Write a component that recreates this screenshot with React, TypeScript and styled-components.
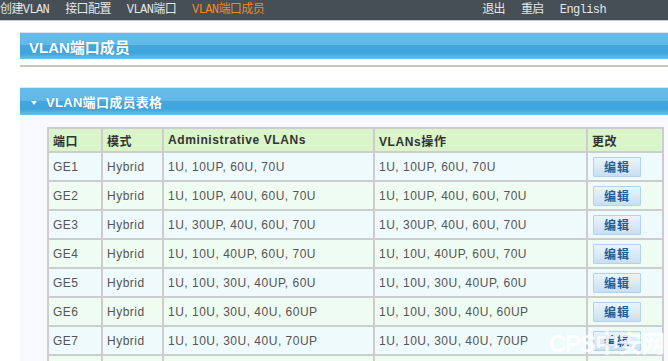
import React from "react";
import styled, { createGlobalStyle } from "styled-components";

const GlobalStyle = createGlobalStyle`
  html, body {
    margin: 0;
    padding: 0;
    background: #ffffff;
    overflow: hidden;
  }
  body {
    font-family: "Liberation Sans", "Noto Sans CJK SC", sans-serif;
  }
`;

interface PortRow {
  port: string;
  mode: string;
  admin: string;
  oper: string;
}

const rows: PortRow[] = [
  { port: "GE1", mode: "Hybrid", admin: "1U, 10UP, 60U, 70U", oper: "1U, 10UP, 60U, 70U" },
  { port: "GE2", mode: "Hybrid", admin: "1U, 10UP, 40U, 60U, 70U", oper: "1U, 10UP, 40U, 60U, 70U" },
  { port: "GE3", mode: "Hybrid", admin: "1U, 30UP, 40U, 60U, 70U", oper: "1U, 30UP, 40U, 60U, 70U" },
  { port: "GE4", mode: "Hybrid", admin: "1U, 10U, 40UP, 60U, 70U", oper: "1U, 10U, 40UP, 60U, 70U" },
  { port: "GE5", mode: "Hybrid", admin: "1U, 10U, 30U, 40UP, 60U", oper: "1U, 10U, 30U, 40UP, 60U" },
  { port: "GE6", mode: "Hybrid", admin: "1U, 10U, 30U, 40U, 60UP", oper: "1U, 10U, 30U, 40U, 60UP" },
  { port: "GE7", mode: "Hybrid", admin: "1U, 10U, 30U, 40U, 70UP", oper: "1U, 10U, 30U, 40U, 70UP" },
];

const App: React.FC = () => {
  return (
    <Page>
      <GlobalStyle />
      <TopNav>
        <NavGroup>
          <NavItem>创建VLAN</NavItem>
          <NavItem>接口配置</NavItem>
          <NavItem>VLAN端口</NavItem>
          <NavItem $active>VLAN端口成员</NavItem>
        </NavGroup>
        <NavGroup>
          <NavItem>退出</NavItem>
          <NavItem>重启</NavItem>
          <NavItem>English</NavItem>
        </NavGroup>
      </TopNav>

      <Content>
        <TitleBar>VLAN端口成员</TitleBar>
        <Divider />

        <Panel>
          <PanelHeader>
            <Caret />
            VLAN端口成员表格
          </PanelHeader>
          <PanelBody>
            <Table>
              <colgroup>
                <col style={{ width: 54 }} />
                <col style={{ width: 61 }} />
                <col style={{ width: 211 }} />
                <col style={{ width: 213 }} />
                <col style={{ width: 76 }} />
              </colgroup>
              <thead>
                <tr>
                  <Th>端口</Th>
                  <Th>模式</Th>
                  <Th>Administrative VLANs</Th>
                  <Th>VLANs操作</Th>
                  <Th>更改</Th>
                </tr>
              </thead>
              <tbody>
                {rows.map((r, i) => (
                  <Row key={r.port} $alt={i % 2 === 1}>
                    <Td>{r.port}</Td>
                    <Td>{r.mode}</Td>
                    <Td>{r.admin}</Td>
                    <Td>{r.oper}</Td>
                    <Td>
                      <EditButton>编辑</EditButton>
                    </Td>
                  </Row>
                ))}
                {/* next row, only its top edge shows in the window */}
                <Row $alt>
                  <Td />
                  <Td />
                  <Td />
                  <Td />
                  <Td />
                </Row>
              </tbody>
            </Table>
          </PanelBody>
        </Panel>
      </Content>

      <Watermark>CPS中安网</Watermark>
    </Page>
  );
};

export default App;

const Page = styled.div`
  position: relative;
  width: 668px;
  height: 361px;
  overflow: hidden;
  background: #ffffff;
`;

const TopNav = styled.div`
  height: 20px;
  background: #464f55;
  border-bottom: 1px solid #c9ccce;
  display: flex;
  align-items: center;
  justify-content: space-between;
  padding: 0 62px 0 0;
`;

const NavGroup = styled.div`
  display: flex;
  align-items: center;
  gap: 16px;
`;

const NavItem = styled.span<{ $active?: boolean }>`
  font-family: "Liberation Mono", "Noto Sans CJK SC", monospace;
  font-size: 12px;
  letter-spacing: -0.6px;
  line-height: 20px;
  color: ${(p) => (p.$active ? "#f28a1c" : "#e4e6e8")};
  white-space: nowrap;
`;

const Content = styled.div`
  padding: 11px 0 0 20px;
`;

const BlueBar = styled.div`
  color: #ffffff;
  font-weight: bold;
  display: flex;
  align-items: center;
  border-top: 1px solid #d4e8f5;
  background: linear-gradient(
    to bottom,
    #66bbe8 0%,
    #62b9e8 46%,
    #43a7de 48%,
    #3ea5dc 78%,
    #6bbfe9 100%
  );
  text-shadow: 0 0 1px rgba(30, 90, 140, 0.4);
  white-space: nowrap;
`;

const TitleBar = styled(BlueBar)`
  height: 26px;
  padding-left: 9px;
  font-size: 15px;
  font-family: "Liberation Sans", "Noto Sans CJK SC", sans-serif;
`;

const Divider = styled.div`
  margin-top: 6px;
  height: 2px;
  background: #c9c5bd;
`;

const Panel = styled.div`
  margin-top: 20px;
`;

const PanelHeader = styled(BlueBar)`
  height: 27px;
  padding-left: 11px;
  font-size: 13px;
  letter-spacing: 0.3px;
  gap: 9px;
`;

const Caret = styled.span`
  width: 0;
  height: 0;
  border-left: 3px solid transparent;
  border-right: 3px solid transparent;
  border-top: 4px solid #ffffff;
  margin-top: 2px;
`;

const PanelBody = styled.div`
  background: #f7f9fc;
  padding: 12px 0 20px 27px;
`;

const Table = styled.table`
  border-collapse: collapse;
  table-layout: fixed;
  width: 615px;
  border: 2px solid #cdcdcd;
`;

const Th = styled.th`
  height: 22px;
  padding: 0 0 0 4px;
  text-align: left;
  background: #d9f5c9;
  border: 2px solid #cdcdcd;
  color: #333333;
  font-size: 12px;
  font-weight: bold;
  letter-spacing: 0.6px;
  font-family: "Liberation Sans", "Noto Sans CJK SC", sans-serif;
  white-space: nowrap;
`;

const Row = styled.tr<{ $alt: boolean }>`
  background: ${(p) => (p.$alt ? "#effcf1" : "#eefafc")};
`;

const Td = styled.td`
  height: 27px;
  padding: 0 0 0 4px;
  border: 2px solid #cdcdcd;
  color: #555555;
  font-size: 12px;
  letter-spacing: 0.5px;
  font-family: "Liberation Sans", "Noto Sans CJK SC", sans-serif;
  white-space: nowrap;
`;

const EditButton = styled.button`
  width: 48px;
  height: 20px;
  padding: 0;
  margin-left: 1px;
  border: 1px solid #b3d2ec;
  border-radius: 1px;
  background: linear-gradient(to bottom, #eaf4fc 0%, #d8e9f7 55%, #c8dff3 100%);
  color: #1f5f98;
  font-size: 12px;
  font-weight: bold;
  font-family: "Noto Sans CJK SC", sans-serif;
  letter-spacing: 1px;
  display: flex;
  align-items: center;
  justify-content: center;
  cursor: pointer;
`;

const Watermark = styled.div`
  position: absolute;
  right: 4px;
  bottom: 2px;
  font-family: "Liberation Sans", "Noto Sans CJK SC", sans-serif;
  font-size: 24px;
  font-weight: bold;
  color: rgba(255, 255, 255, 0.85);
  letter-spacing: -1px;
  pointer-events: none;
`;
